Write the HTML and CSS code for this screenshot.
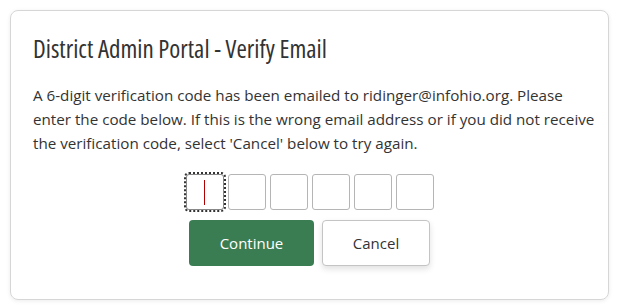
FILE: index.html
```html
<!DOCTYPE html>
<html>
<head>
<meta charset="utf-8">
<link rel="stylesheet" href="styles.css">
</head>
<body>
<div class="card">
  <h1 class="title">District Admin Portal - Verify Email</h1>
  <p class="msg"><span class="line">A 6-digit verification code has been emailed to ridinger@infohio.org. Please</span> <span class="line">enter the code below. If this is the wrong email address or if you did not receive</span> <span class="line">the verification code, select 'Cancel' below to try again.</span></p>
  <div class="code">
    <div class="digit focus"><span class="caret"></span></div>
    <div class="digit"></div>
    <div class="digit"></div>
    <div class="digit"></div>
    <div class="digit"></div>
    <div class="digit"></div>
  </div>
  <div class="actions">
    <button class="btn primary">Continue</button>
    <button class="btn secondary">Cancel</button>
  </div>
</div>
</body>
</html>
```
FILE: styles.css
```css
html, body { margin: 0; padding: 0; background: #fff; }
body {
  font-family: "Open Sans", "Noto Sans", sans-serif;
  color: #333;
  padding: 10px 9px 7px 10px;
}
.card {
  border: 1px solid #d6d6d6;
  border-radius: 8px;
  box-shadow: 0 1px 4px rgba(0,0,0,0.08);
  padding: 22px 22px 34px 22px;
  height: 290px;
  box-sizing: border-box;
}
.title {
  margin: 0;
  font-size: 25px;
  font-stretch: 75%;
  font-weight: 400;
  line-height: 30px;
  color: #333;
}
.msg {
  margin: 20px 0 0 0;
  font-size: 15.2px;
  line-height: 24px;
  color: #333;
}
.line {
  display: block;
  white-space: nowrap;
}
.code {
  display: flex;
  justify-content: center;
  gap: 4px;
  margin-top: 19px;
}
.digit {
  width: 38px;
  height: 36px;
  box-sizing: border-box;
  border: 1px solid #b5b5b5;
  border-radius: 3px;
  display: flex;
  align-items: center;
  justify-content: center;
}
.digit.focus {
  outline: 2px dotted #333;
  outline-offset: 0;
  border-color: #888;
}
.caret {
  width: 1px;
  height: 25px;
  background: #b00000;
}
.actions {
  display: flex;
  justify-content: center;
  gap: 8px;
  margin-top: 10px;
}
.btn {
  font-family: "Open Sans", "Noto Sans", sans-serif;
  font-size: 15px;
  height: 46px;
  border-radius: 4px;
  cursor: pointer;
}
.primary {
  width: 125px;
  background: #3a7d52;
  color: #fff;
  border: none;
}
.secondary {
  width: 108px;
  background: #fff;
  color: #333;
  border: 1px solid #c4c4c4;
  box-shadow: 0 3px 6px rgba(0,0,0,0.12);
}
```
